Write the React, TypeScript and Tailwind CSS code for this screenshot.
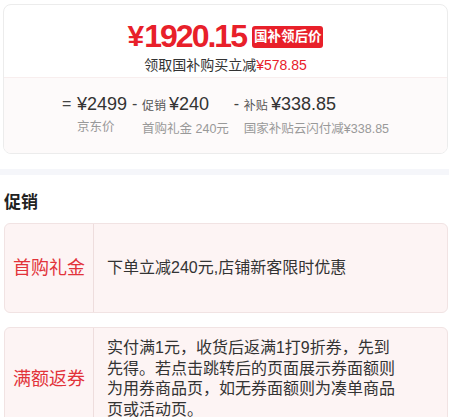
const font = { fontFamily: '"Liberation Sans", "Noto Sans CJK SC", sans-serif' };

function PriceCard() {
  return (
    <div className="ml-[3px] mt-[4px] w-[445px] overflow-hidden rounded-lg border border-[#ececec] bg-white">
      {/* final price */}
      <div className="flex h-[73px] flex-col items-center border-b border-[#f8eeee] pt-[13px]">
        <div className="flex items-center">
          <span className="text-[30px] font-bold leading-[36px] text-[#e8202a]">¥</span>
          <span className="text-[32px] font-bold leading-[36px] tracking-[-2px] text-[#e8202a]">1920.15</span>
          <span className="ml-[6px] mt-[2px] rounded-[3px] bg-[#e8202a] px-[2px] text-[13.5px] font-bold leading-[22px] text-white">
            国补领后价
          </span>
        </div>
        <div className="mt-[2px] text-[14px] leading-[18px] text-[#333]">
          领取国补购买立减<span className="text-[#e8202a]">¥578.85</span>
        </div>
      </div>

      {/* breakdown */}
      <div className="flex h-[75px] justify-center gap-[5px] bg-[#fdfafa] pt-[14px]">
        <div className="flex">
          <span className="w-[15px] text-[16px] leading-[24px] text-[#444]">=</span>
          <div className="flex flex-col">
            <span className="text-[18px] leading-[24px] text-[#333]">¥2499</span>
            <span className="mt-[2px] text-[12.5px] leading-[18px] text-[#999]">京东价</span>
          </div>
        </div>
        <div className="flex">
          <span className="w-[10px] text-[16px] leading-[24px] text-[#444]">-</span>
          <div className="flex flex-col">
            <span className="text-[18px] leading-[24px] text-[#333]">
              <span className="mr-[3px] text-[12px] text-[#555]">促销</span>¥240
            </span>
            <span className="mt-[2px] text-[12.5px] leading-[18px] text-[#999]">首购礼金 240元</span>
          </div>
        </div>
        <div className="flex">
          <span className="w-[10px] text-[16px] leading-[24px] text-[#444]">-</span>
          <div className="flex flex-col">
            <span className="text-[18px] leading-[24px] text-[#333]">
              <span className="mr-[3px] text-[12px] text-[#555]">补贴</span>¥338.85
            </span>
            <span className="mt-[2px] text-[12.5px] leading-[18px] text-[#999]">国家补贴云闪付减¥338.85</span>
          </div>
        </div>
      </div>
    </div>
  );
}

function PromoRow({ label, children, className }: { label: string; children: React.ReactNode; className?: string }) {
  return (
    <div className={`ml-[4px] flex w-[444px] rounded-md border border-[#f1e3e3] bg-[#fdf4f4] ${className ?? ""}`}>
      <div className="flex w-[89px] shrink-0 items-center justify-center border-r border-[#eedddd] text-[18px] text-[#e2333a]">
        {label}
      </div>
      <div className="flex w-[310px] items-center py-[10px] pl-[13px] text-[16px] leading-[20.5px] text-[#333]">
        {children}
      </div>
    </div>
  );
}

export default function App() {
  return (
    <div className="h-[417px] w-[449px] overflow-hidden bg-white" style={font}>
      <PriceCard />
      <div className="mt-[15px] h-[6px] bg-[#f5f6fa]" />
      <h3 className="ml-[4px] mt-[18px] text-[17px] font-bold leading-[20px] text-[#222]">促销</h3>
      <PromoRow label="首购礼金" className="mt-[10px] h-[90px]">
        下单立减240元,店铺新客限时优惠
      </PromoRow>
      <PromoRow label="满额返券" className="mt-[14px]">
        实付满1元，收货后返满1打9折券，先到先得。若点击跳转后的页面展示券面额则为用券商品页，如无券面额则为凑单商品页或活动页。
      </PromoRow>
    </div>
  );
}
